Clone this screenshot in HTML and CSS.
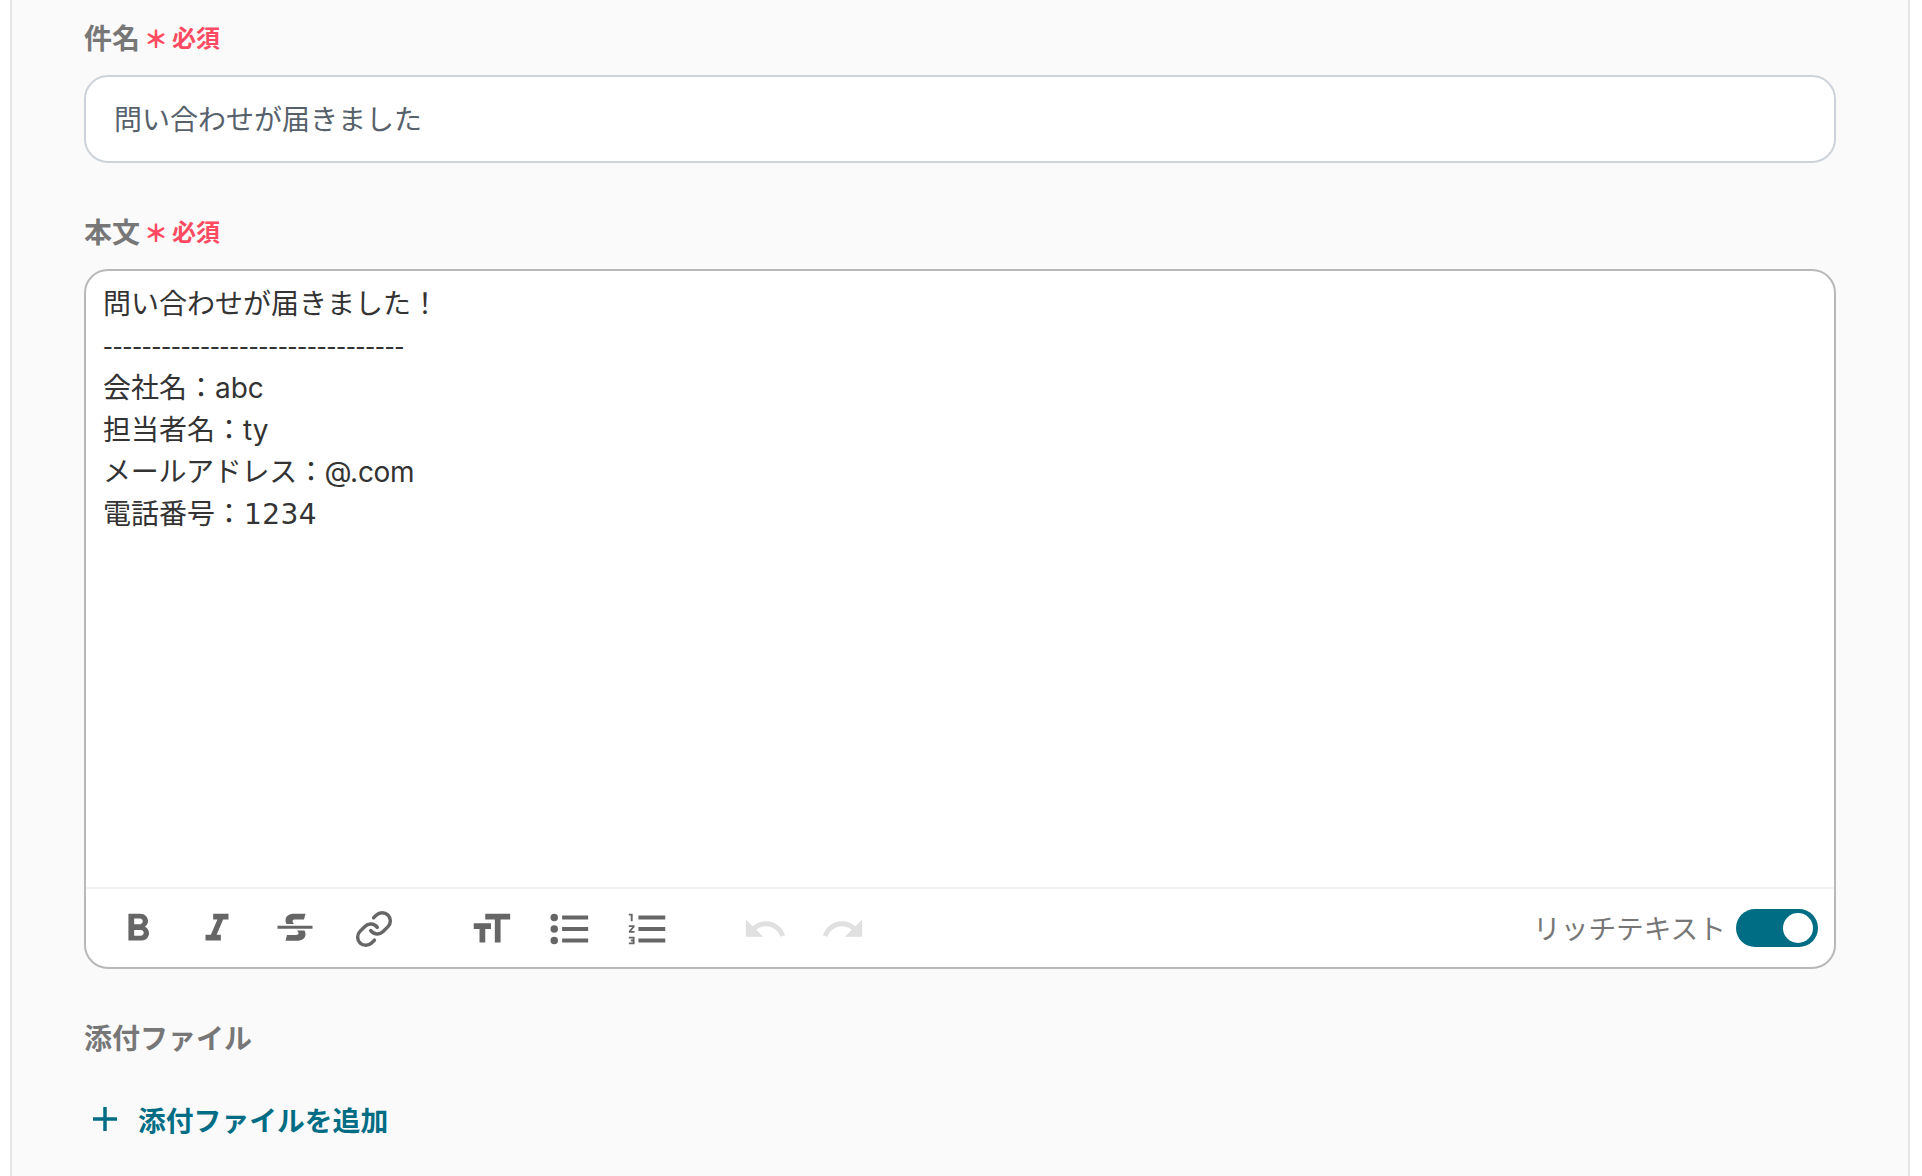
FILE: index.html
```html
<!DOCTYPE html>
<html lang="ja">
<head>
  <meta charset="UTF-8" />
  <title>メール送信</title>
  <link rel="stylesheet" href="styles.css">
</head>
<body>
  <div class="panel">
    <div class="field field-subject">
      <div class="label">件名<span class="required"><span class="star">＊</span>必須</span></div>
      <div class="input">問い合わせが届きました</div>
    </div>

    <div class="field field-body">
      <div class="label">本文<span class="required"><span class="star">＊</span>必須</span></div>
      <div class="editor">
        <div class="editor-text">
          <div>問い合わせが届きました！</div>
          <div class="dashes">-------------------------------</div>
          <div>会社名：abc</div>
          <div>担当者名：ty</div>
          <div class="tight">メールアドレス：@.com</div>
          <div>電話番号：<span class="digits">1234</span></div>
        </div>
        <div class="toolbar">
          <div class="tool-group">
            <svg class="icon" viewBox="0 0 24 24"><path d="M15.6 10.79c.97-.67 1.65-1.77 1.65-2.79 0-2.26-1.75-4-4-4H7v14h7.04c2.09 0 3.71-1.7 3.71-3.79 0-1.52-.86-2.82-2.15-3.42zM10 6.5h3c.83 0 1.5.67 1.5 1.5s-.67 1.5-1.5 1.5h-3v-3zm3.5 9H10v-3h3.5c.83 0 1.5.67 1.5 1.5s-.67 1.5-1.5 1.5z"/></svg>
            <svg class="icon" viewBox="0 0 24 24"><path d="M10 4v3h2.21l-3.42 8H6v3h8v-3h-2.21l3.42-8H18V4z"/></svg>
            <svg class="icon" viewBox="0 0 46 46"><path d="M33.5 7.7L32 13.5H23c-1.5 0-2.5.6-2.5 1.6 0 .9.5 1.9 1.5 2.9H14.5c-.7-1-1-2.2-1-3.5C13.5 10 17 7.7 22 7.7Z"/><path d="M5.5 19.7H40.5V22.7H5.5Z"/><path d="M13.5 34.7L15 28.9H24c1.5 0 2.5-.6 2.5-1.6 0-.9-.5-1.9-1.500-2.900H32.500c.7 1 1 2.200 1 3.500C33.500 32.400 30 34.700 25 34.700Z"/></svg>
            <svg class="icon icon-line" viewBox="-2 -2 28 28"><path d="M10 13a5 5 0 0 0 7.54.54l3-3a5 5 0 0 0-7.07-7.07l-1.72 1.71"/><path d="M14 11a5 5 0 0 0-7.54-.54l-3 3a5 5 0 0 0 7.07 7.07l1.71-1.71"/></svg>
          </div>
          <div class="tool-group">
            <svg class="icon" viewBox="0 0 24 24"><path d="M9 4v3h5v12h3V7h5V4H9zm-6 8h3v7h3v-7h3V9H3v3z"/></svg>
            <svg class="icon" viewBox="0 0 24 24"><circle cx="4.3" cy="6" r="1.95"/><circle cx="4.3" cy="12" r="1.95"/><circle cx="4.3" cy="18" r="1.95"/><path d="M8.4 5H22v2H8.4zM8.4 11H22v2H8.4zM8.4 17H22v2H8.4z"/></svg>
            <svg class="icon" viewBox="0 0 24 24"><path d="M2 17h2v.5H3v1h1v.5H2v1h3v-4H2v1zm1-9h1V4H2v1h1v3zm-1 3h1.8L2 13.1v.9h3v-1H3.2L5 10.9V10H2v1zm5-6v2h14V5H7zm0 14h14v-2H7v2zm0-6h14v-2H7v2z"/></svg>
          </div>
          <div class="tool-group">
            <svg class="icon disabled" viewBox="0 0 24 24"><path d="M12.5 8c-2.65 0-5.05.99-6.9 2.6L2 7v9h9l-3.62-3.62c1.39-1.16 3.16-1.88 5.12-1.88 3.54 0 6.55 2.31 7.6 5.5l2.37-.78C21.08 11.03 17.15 8 12.5 8z"/></svg>
            <svg class="icon disabled" viewBox="0 0 24 24"><path d="M18.4 10.6C16.55 8.99 14.15 8 11.5 8c-4.65 0-8.58 3.03-9.96 7.22L3.9 16c1.05-3.19 4.05-5.5 7.6-5.5 1.95 0 3.73.72 5.12 1.88L13 16h9V7l-3.6 3.6z"/></svg>
          </div>
          <div class="rich-text">
            <span>リッチテキスト</span>
            <div class="toggle"><div class="knob"></div></div>
          </div>
        </div>
      </div>
    </div>

    <div class="field">
      <div class="label">添付ファイル</div>
      <div class="add-file">
        <svg class="plus" viewBox="0 0 26 26"><path d="M13 1v24M1 13h24"/></svg>
        <span>添付ファイルを追加</span>
      </div>
    </div>
  </div>
</body>
</html>
```

FILE: styles.css
```css
* {
  box-sizing: border-box;
}

html, body {
  height: 100%;
}

body {
  margin: 0;
  background-color: #fff;
  font-family: "Noto Sans CJK JP", "Noto Sans", sans-serif;
  overflow: hidden;
}

.panel {
  margin: 0 12px 0 10px;
  height: 100%;
  padding: 18px 72px 0;
  background-color: #fafafa;
  border-left: 2px solid #e6e6e6;
  border-right: 2px solid #e6e6e6;
}

.field-subject {
  margin-bottom: 49.5px;
}

.field-body {
  margin-bottom: 49px;
}

.label {
  height: 40px;
  margin-bottom: 17px;
  padding-bottom: 2px;
  display: flex;
  align-items: center;
  gap: 4px;
  color: #777;
  font-size: 28px;
  line-height: 38px;
  font-weight: 700;
}

.required {
  display: flex;
  align-items: center;
  color: #ff4b61;
  font-size: 24px;
  font-weight: 700;
}

.star {
  width: 28px;
  padding-top: 2px;
  font-weight: 900;
}

.input {
  height: 87.5px;
  padding: 0 28px 2px;
  display: flex;
  align-items: center;
  background-color: #fff;
  border: 2px solid #ccd3da;
  border-radius: 24px;
  color: #56616b;
  font-size: 28px;
}

.editor {
  height: 700px;
  display: flex;
  flex-direction: column;
  background-color: #fff;
  border: 2px solid #b8b8b8;
  border-radius: 24px;
}

.editor-text {
  flex: 1;
  padding: 12px 17px;
  color: #333;
  font-family: Inter, "Noto Sans CJK JP", sans-serif;
  font-size: 28px;
  line-height: 42px;
}

.dashes {
  margin: -2px 0 2px;
  font-family: "Noto Sans CJK JP", sans-serif;
}

.tight {
  letter-spacing: -0.3px;
}

.digits {
  margin-left: 1px;
  font-family: "DejaVu Sans", sans-serif;
  letter-spacing: 0.4px;
}

.toolbar {
  height: 80px;
  padding: 1px 16px 0 29px;
  display: flex;
  align-items: center;
  gap: 71px;
  border-top: 2px solid #f2f2f2;
}

.tool-group {
  display: flex;
  gap: 32.5px;
}

.icon {
  width: 46px;
  height: 46px;
  display: block;
  fill: #666;
}

.icon.disabled {
  fill: #e0e0e0;
}

.icon-line {
  fill: none;
  stroke: #666;
  stroke-width: 2.1;
  stroke-linecap: round;
  stroke-linejoin: round;
}

.rich-text {
  margin-left: auto;
  margin-top: -3px;
  display: flex;
  align-items: center;
  gap: 10px;
  color: #777;
  font-size: 27.7px;
}

.toggle {
  width: 82px;
  height: 38px;
  margin-top: 2px;
  padding: 4px 5px;
  display: flex;
  justify-content: flex-end;
  background-color: #006d85;
  border-radius: 19px;
}

.knob {
  width: 30px;
  height: 30px;
  background-color: #fff;
  border-radius: 50%;
}

.add-file {
  height: 40px;
  margin-top: 41px;
  padding-left: 8px;
  display: flex;
  align-items: center;
  gap: 20px;
  color: #006d85;
  font-size: 27.8px;
  font-weight: 700;
}

.plus {
  width: 26px;
  height: 26px;
  fill: none;
  stroke: #006d85;
  stroke-width: 3.5;
}
```
